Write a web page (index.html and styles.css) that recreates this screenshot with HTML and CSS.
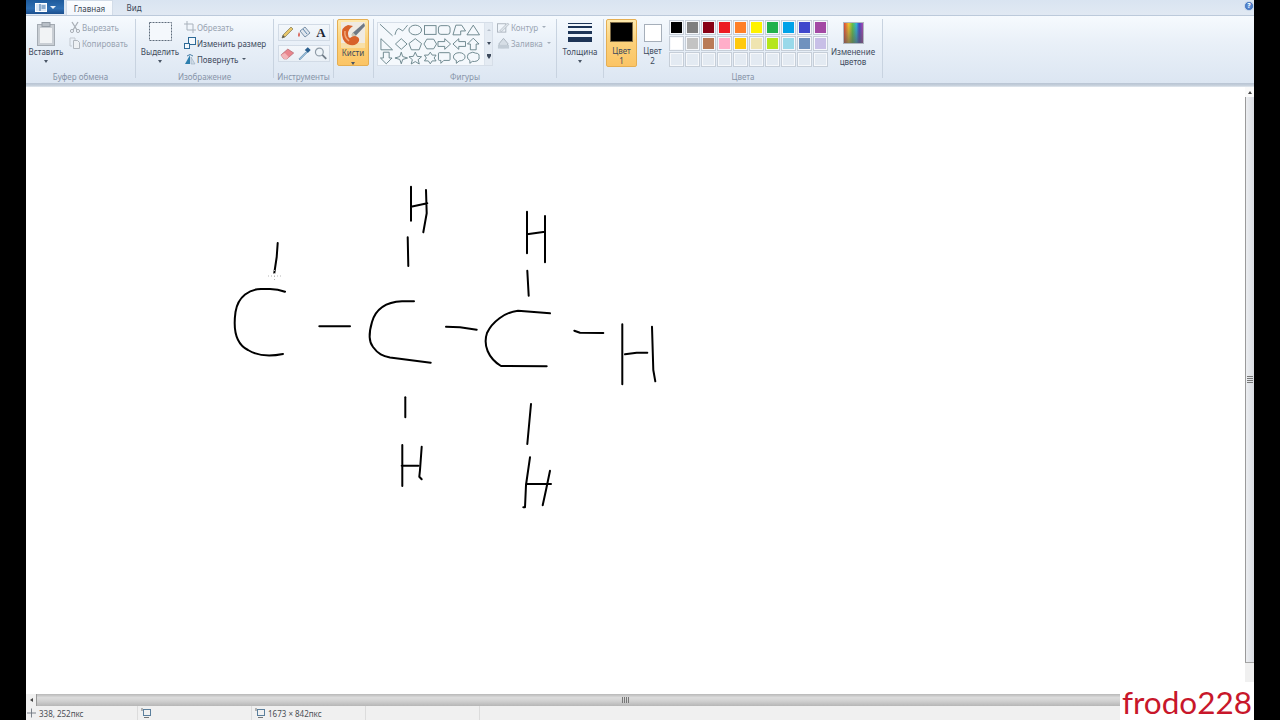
FILE: index.html
```html
<!DOCTYPE html>
<html lang="ru">
<head>
<meta charset="utf-8">
<title>Paint</title>
<link rel="stylesheet" href="styles.css">
</head>
<body>
<div class="app">
  <header class="tabstrip">
    <div class="appmenu">
      <svg width="12" height="9" viewBox="0 0 12 9"><rect x="0.5" y="0.5" width="11" height="8" fill="#dce8f5" stroke="#fff"/><path d="M5 1v7M6.5 3h4M6.5 5h4" stroke="#3a6ea5"/></svg>
      <span class="appcaret"></span>
    </div>
    <div class="tab active">Главная</div>
    <div class="tab">Вид</div>
    <div class="help">?</div>
  </header>

  <section class="ribbon">
    <div class="group g-clip">
      <div class="gbody">
        <div class="big w40">
          <div class="bigicon">
            <svg width="18" height="24" viewBox="0 0 18 24"><rect x="0.5" y="2.5" width="17" height="21" fill="#c9ced4" stroke="#a4abb3"/><rect x="3" y="6" width="12" height="15" fill="#f1f3f5"/><rect x="5" y="0.5" width="8" height="4" fill="#b8bfc7" stroke="#959da6"/></svg>
          </div>
          <div class="lbl">Вставить</div>
          <div class="caret"></div>
        </div>
        <div class="smallcol m3">
          <div class="row off">
            <svg class="ri" width="12" height="12" viewBox="0 0 12 12"><path d="M3 1l5 8M9 1L4 9" stroke="#a9afb6" stroke-width="1.3" fill="none"/><circle cx="3" cy="10" r="1.6" fill="none" stroke="#a9afb6"/><circle cx="9" cy="10" r="1.6" fill="none" stroke="#a9afb6"/></svg>
            <span>Вырезать</span>
          </div>
          <div class="row off">
            <svg class="ri" width="12" height="12" viewBox="0 0 12 12"><path d="M1 1h5v2M1 1v8h2" stroke="#c3c9d0" fill="none"/><path d="M4.500 3.500h4l2 2v6h-6z" fill="#eef1f4" stroke="#b0b6bd"/></svg>
            <span>Копировать</span>
          </div>
        </div>
      </div>
      <div class="glabel">Буфер обмена</div>
    </div>

    <div class="group g-image">
      <div class="gbody">
        <div class="big w48">
          <div class="bigicon">
            <svg width="23" height="19" viewBox="0 0 23 19"><rect x="0.500" y="0.500" width="22" height="18" fill="#f4f8fc" stroke="#5f6d7c" stroke-dasharray="2 1"/></svg>
          </div>
          <div class="lbl">Выделить</div>
          <div class="caret"></div>
        </div>
        <div class="smallcol">
          <div class="row off">
            <svg class="ri" width="12" height="12" viewBox="0 0 12 12"><path d="M3 0v9h9M0 3h9v9" stroke="#a9b2bc" fill="none"/></svg>
            <span>Обрезать</span>
          </div>
          <div class="row">
            <svg class="ri" width="12" height="12" viewBox="0 0 12 12"><rect x="4.500" y="0.500" width="7" height="7" fill="#f4f8fc" stroke="#2d6a97"/><rect x="0.500" y="6.500" width="5" height="5" fill="#f4f8fc" stroke="#2d6a97"/></svg>
            <span>Изменить размер</span>
          </div>
          <div class="row">
            <svg class="ri" width="12" height="12" viewBox="0 0 12 12"><path d="M1 11L6 2v9z" fill="#2d7fae"/><path d="M7 11V4l4 7z" fill="#cfdbe6" stroke="#8ca1b4" stroke-width=".5"/><path d="M3 3q3-3 6 0" fill="none" stroke="#4a7fa5"/></svg>
            <span>Повернуть</span><i class="mini"></i>
          </div>
        </div>
      </div>
      <div class="glabel">Изображение</div>
    </div>

    <div class="group g-tools">
      <div class="gbody">
        <div class="tools">
          <div class="toolrow">
            <svg width="17" height="17" viewBox="0 0 17 17"><path d="M3 14l1-3 8-8 2 2-8 8z" fill="#e8c66a" stroke="#7f7a55" stroke-width=".7"/><path d="M3 14l1-3 2 2z" fill="#555"/></svg>
            <svg width="17" height="17" viewBox="0 0 17 17"><path d="M4 7l5-4 5 6-5 4z" fill="#dfe6ee" stroke="#7890a8"/><path d="M7 5l4 5" stroke="#5f87ad"/><path d="M3 8q-2 4 0 5q2-2 0-5" fill="#d9645a"/></svg>
            <span class="textool">A</span>
          </div>
          <div class="toolrow">
            <svg width="17" height="17" viewBox="0 0 17 17"><path d="M2 10l7-6 6 4-7 6H5z" fill="#e9858d" stroke="#b0636c" stroke-width=".7"/><path d="M2 10l3 4h3l2-2-4-4z" fill="#f2b4b8"/></svg>
            <svg width="17" height="17" viewBox="0 0 17 17"><path d="M3 14l7-7 1 1-7 7z" fill="#9fc4e0" stroke="#5c87a8" stroke-width=".7"/><path d="M9 5l3-3 3 3-3 3z" fill="#2a5f8f"/></svg>
            <svg width="17" height="17" viewBox="0 0 17 17"><circle cx="7.500" cy="7" r="4" fill="#eef4f9" stroke="#8f9ba7" stroke-width="1.200"/><path d="M10.500 10l4 4" stroke="#6f7b87" stroke-width="1.800"/></svg>
          </div>
        </div>
      </div>
      <div class="glabel">Инструменты</div>
    </div>

    <div class="group g-brush">
      <div class="gbody">
        <div class="orange brushbtn">
          <div class="brushicon">
            <svg width="24" height="26" viewBox="0 0 24 26"><rect width="24" height="26" fill="#efeae2"/><rect y="21" width="24" height="5" fill="#f7dfa8"/><path d="M23 1L11 11.500l3 3L24 4z" fill="#6f7a86"/><path d="M12 10.500l3.500 3.500-2 2-3.500-3z" fill="#c9c4b4"/><path d="M7 3Q0 5 1 13t8 10q7 1 9-4 1-4-4-5-3 0-5 2-2-1-2-4 0-5 5-8z" fill="#d8622a"/><path d="M4 9q-1 6 4 10" fill="none" stroke="#f2a878" stroke-width="1.500"/></svg>
          </div>
          <div class="lbl">Кисти</div>
          <div class="caret"></div>
        </div>
      </div>
    </div>

    <div class="group g-shapes">
      <div class="gbody">
        <div class="shapepanel">
          <div class="shapes">
            <svg viewBox="0 0 15 14"><path d="M1 1l13 12"/></svg>
            <svg viewBox="0 0 15 14"><path d="M1 12q2-8 5-6t3 2 5-6"/></svg>
            <svg viewBox="0 0 15 14"><ellipse cx="7.500" cy="7" rx="6.500" ry="5"/></svg>
            <svg viewBox="0 0 15 14"><rect x="1.500" y="2.500" width="12" height="9"/></svg>
            <svg viewBox="0 0 15 14"><rect x="1.500" y="2.500" width="12" height="9" rx="2.500"/></svg>
            <svg viewBox="0 0 15 14"><path d="M1 12l3-10h6l4 6-5 0v4z"/></svg>
            <svg viewBox="0 0 15 14"><path d="M7.500 2L14 12H1z"/></svg>
            <svg viewBox="0 0 15 14"><path d="M2 1.500L14 13H2z"/></svg>
            <svg viewBox="0 0 15 14"><path d="M7.500 1.500L13.500 7l-6 5.500L1.500 7z"/></svg>
            <svg viewBox="0 0 15 14"><path d="M7.500 1.500L14 6.500 11.500 13h-8L1 6.500z"/></svg>
            <svg viewBox="0 0 15 14"><path d="M4 2h7l3 5-3 5H4L1 7z"/></svg>
            <svg viewBox="0 0 15 14"><path d="M1 4.500h7V1.500L14 7l-6 5.500V9.500H1z"/></svg>
            <svg viewBox="0 0 15 14"><path d="M14 4.500H7V1.500L1 7l6 5.500V9.500h7z"/></svg>
            <svg viewBox="0 0 15 14"><path d="M4.500 13V7h-3L7.500 1l6 6h-3v6z"/></svg>
            <svg viewBox="0 0 15 14"><path d="M4.500 1v6h-3l6 6 6-6h-3V1z"/></svg>
            <svg viewBox="0 0 15 14"><path d="M7.500 1l1.500 4.500L14 7 9 8.500 7.500 13 6 8.500 1 7l5-1.500z"/></svg>
            <svg viewBox="0 0 15 14"><path d="M7.500 1l2 4.300 4.500.4-3.500 3 1.200 4.500-4.200-2.500-4.200 2.500 1.200-4.500L1 5.700l4.500-.4z"/></svg>
            <svg viewBox="0 0 15 14"><path d="M7.500 1l2 3h4l-2 3 2 3h-4l-2 3-2-3h-4l2-3-2-3h4z"/></svg>
            <svg viewBox="0 0 15 14"><path d="M2.500 1.500h10q1 0 1 1v6q0 1-1 1H7l-3 3v-3H2.500q-1 0-1-1v-6q0-1 1-1z"/></svg>
            <svg viewBox="0 0 15 14"><path d="M7.500 1.500c3.500 0 6 1.800 6 4.300s-2.500 4.200-6 4.200l-3 2.500V9.500C2.500 8.800 1.500 7.500 1.500 5.800c0-2.500 2.500-4.300 6-4.300z"/></svg>
            <svg viewBox="0 0 15 14"><path d="M4 2q3-2 6 0 4 0 3.500 3.500 1 3-2 4.500-3 1-5 .5l-2.500 2v-3Q1 8 1.500 5.500 1.500 2.500 4 2z"/></svg>
          </div>
          <div class="shapescroll">
            <i class="su"></i><i class="sd"></i><i class="sm"></i>
          </div>
        </div>
        <div class="smallcol m4">
          <div class="row off">
            <svg class="ri" width="13" height="12" viewBox="0 0 14 12"><rect x="0.500" y="2.500" width="9" height="9" fill="none" stroke="#aab3bd"/><path d="M3 10l8-8 2 1-8 8z" fill="#dfe5eb" stroke="#aab3bd" stroke-width=".7"/></svg>
            <span>Контур</span><i class="mini off"></i>
          </div>
          <div class="row off">
            <svg class="ri" width="13" height="12" viewBox="0 0 14 12"><path d="M2 7l5-6 5 6-4 4H4z" fill="#d6dee6" stroke="#aab3bd"/><rect x="1" y="8" width="12" height="4" fill="#c2ccd6"/></svg>
            <span>Заливка</span><i class="mini off"></i>
          </div>
        </div>
      </div>
      <div class="glabel">Фигуры</div>
    </div>

    <div class="group g-thick">
      <div class="gbody">
        <div class="big w46">
          <div class="thickicon"><i class="t1"></i><i class="t2"></i><i class="t3"></i><i class="t4"></i></div>
          <div class="lbl">Толщина</div>
          <div class="caret"></div>
        </div>
      </div>
    </div>

    <div class="group g-colors">
      <div class="gbody">
        <div class="orange colorbtn">
          <div class="curcolor black"></div>
          <div class="lbl">Цвет<br>1</div>
        </div>
        <div class="color2">
          <div class="curcolor2"></div>
          <div class="lbl">Цвет<br>2</div>
        </div>
        <div class="palette">
          <i class="sw c1"></i><i class="sw c2"></i><i class="sw c3"></i><i class="sw c4"></i><i class="sw c5"></i><i class="sw c6"></i><i class="sw c7"></i><i class="sw c8"></i><i class="sw c9"></i><i class="sw c10"></i>
          <i class="sw c11"></i><i class="sw c12"></i><i class="sw c13"></i><i class="sw c14"></i><i class="sw c15"></i><i class="sw c16"></i><i class="sw c17"></i><i class="sw c18"></i><i class="sw c19"></i><i class="sw c20"></i>
          <i class="sw"></i><i class="sw"></i><i class="sw"></i><i class="sw"></i><i class="sw"></i><i class="sw"></i><i class="sw"></i><i class="sw"></i><i class="sw"></i><i class="sw"></i>
        </div>
        <div class="changecolors">
          <div class="rainbowwrap"><div class="rainbow"></div></div>
          <div class="lbl">Изменение<br>цветов</div>
        </div>
      </div>
      <div class="glabel">Цвета</div>
    </div>
  </section>
  <div class="ribbonshadow"></div>

  <main class="workspace">
    <svg class="canvas" viewBox="26 87 1219 607" preserveAspectRatio="none">
      <g class="ink">
        <path d="M285 291.700Q278 289 270 289H261C250 289 238 296 235.500 312C233 330 236 344 248 350C256 355 268 357 283 354"/>
        <path d="M277.700 243L276.700 257 274.300 273"/>
        <path d="M319.300 326.300H350"/>
        <path d="M414 301.300H402C388 302 376 308 372 322C369 332 369 342 373 347C378 354 383 356 390 357.500L430.700 362.700"/>
        <path d="M411 186.700V220.700M426 190L426.700 213.300 423.300 232.300M411 206.700L427.300 203.300"/>
        <path d="M407.700 237.300L408.300 266"/>
        <path d="M405.300 397.300V417.300"/>
        <path d="M402.300 445V486M401.700 465.700H418.300M421.700 446.700L420 470 419.300 476.700 421.700 479.300"/>
        <path d="M446 326.700L460 327.300 476.700 329.700"/>
        <path d="M550 313.300L518 310.700C505 312 492 322 487 333C483 345 488 358 501 366L546.700 366.300"/>
        <path d="M527 211.700V253.300M545 216V262.300M527 234.300L545 231.700"/>
        <path d="M527.300 270.700L528.700 295.700"/>
        <path d="M574.300 330.700L580 332.700 603.300 333"/>
        <path d="M622.300 324.300V384.300M625 354.300L636.700 352.700H647.300M652 326.700L653.300 370 655.300 381.300"/>
        <path d="M531 404L527.300 444"/>
        <path d="M530 457.300L526 485 525 507.300H523.300M526 484H551M550 470.700L546 490 542.700 505.300"/>
      </g>
      <path class="cursor" d="M268 276h13M274.500 270v12"/>
    </svg>
    <div class="vscroll">
      <div class="arrowbtn"><i class="up"></i></div>
      <div class="vthumb"><i></i><i></i><i></i><i></i></div>
      <div class="vrest"></div>
    </div>
  </main>

  <div class="hscroll">
    <div class="harrow"><i></i></div>
    <div class="hthumb"><span class="grip"><i></i><i></i><i></i><i></i></span></div>
  </div>

  <footer class="status">
    <div class="cell c-pos">
      <svg width="9" height="10" viewBox="0 0 10 10"><path d="M5 0v10M0 5h10" stroke="#6f7780"/></svg>
      <span>338, 252пкс</span>
    </div>
    <div class="cell c-sel">
      <svg width="10" height="10" viewBox="0 0 10 10"><rect x="2.500" y="1.500" width="7" height="6" fill="none" stroke="#5b7f9c"/><path d="M1 0v3M3 9.500h5" stroke="#777"/></svg>
    </div>
    <div class="cell c-size">
      <svg width="10" height="10" viewBox="0 0 10 10"><rect x="2.500" y="1.500" width="7" height="6" fill="none" stroke="#5b7f9c"/><path d="M1 0v3M3 9.500h5" stroke="#777"/></svg>
      <span>1673 × 842пкс</span>
    </div>
    <div class="cell c-empty"></div>
    <div class="cell c-rest"></div>
  </footer>

  <div class="watermark">frodo228</div>
</div>
</body>
</html>
```

FILE: styles.css
```css
* { box-sizing: border-box; }
html, body { margin: 0; height: 100%; }
body {
  background: #000;
  padding: 0 26px;
  overflow: hidden;
  font-family: "Noto Sans", "Open Sans", sans-serif;
  font-size: 8px;
  color: #3d4a5c;
}
.app {
  position: relative;
  width: 1228px;
  height: 720px;
  display: flex;
  flex-direction: column;
  background: #fff;
}

/* tab strip */
.tabstrip {
  height: 15px;
  flex: none;
  display: flex;
  background: linear-gradient(#d9e4f1, #e1e9f3);
}
.appmenu {
  width: 38px;
  height: 14px;
  background: linear-gradient(#1d5a9c, #2f6fb3 60%, #1b4f8e);
  display: flex;
  align-items: center;
  justify-content: center;
  gap: 3px;
}
.appcaret {
  border: 3px solid transparent;
  border-top-color: #e8f0f8;
  border-bottom: 0;
}
.tab {
  line-height: 16px;
  text-align: center;
  font-size: 8px;
  color: #3a4656;
}
.tab.active {
  width: 47px;
  margin-left: 2px;
  background: linear-gradient(#fbfdff, #f3f7fc);
  border: 1px solid #d2dce8;
  border-bottom: 0;
  line-height: 15px;
}
.tab:not(.active) { width: 42px; }
.help {
  margin-left: auto;
  width: 10px;
  height: 10px;
  margin-top: 1px;
  border-radius: 50%;
  background: radial-gradient(#6f9ee0, #2d5fb0);
  border: 1px solid #c6d6ea;
  color: #fff;
  font-size: 7px;
  line-height: 8px;
  text-align: center;
  font-weight: 700;
  overflow: hidden;
}

/* ribbon */
.ribbon {
  height: 68px;
  flex: none;
  display: flex;
  border-top: 1px solid #bccadb;
  background: linear-gradient(#f6fafe 0, #e9f0f8 40%, #dce6f2 100%);
}
.ribbonshadow {
  height: 4px;
  flex: none;
  background: linear-gradient(#b8c4d3, #c6d0dc 60%, #e3e9f0);
}
.group {
  display: flex;
  flex-direction: column;
  margin-top: 2px;
  border-right: 1px solid;
  border-image: linear-gradient(transparent 2px, #c8d3e0 2px, #c8d3e0 59px, transparent 59px) 1;
}
.gbody {
  display: flex;
  flex: none;
  height: 53px;
  padding-top: 1px;
}
.glabel {
  flex: none;
  height: 12px;
  line-height: 12px;
  text-align: center;
  color: #8794a8;
  font-size: 8px;
  white-space: nowrap;
}
.g-clip { width: 110px; }
.g-image { width: 138px; }
.g-tools { width: 60px; }
.g-brush { width: 40px; }
.g-shapes { width: 183px; }
.g-thick { width: 47px; }
.g-colors { width: 279px; }

.big { display: flex; flex-direction: column; align-items: center; flex: none; }
.w40 { width: 40px; }
.w48 { width: 48px; }
.w46 { width: 46px; }
.bigicon {
  height: 28px;
  display: flex;
  align-items: flex-start;
  justify-content: center;
  padding-top: 3px;
}
.lbl {
  line-height: 10px;
  text-align: center;
  white-space: nowrap;
  font-size: 8px;
}
.caret {
  margin-top: 3px;
  border: 2.500px solid transparent;
  border-top: 3px solid #4a5666;
  border-bottom: 0;
  width: 0;
}

.smallcol { display: flex; flex-direction: column; flex: none; }
.m3 { margin-left: 3px; }
.m4 { margin-left: 4px; }
.row {
  height: 16px;
  display: flex;
  align-items: center;
  white-space: nowrap;
  gap: 1px;
}
.ri { flex: none; }
.row.off { color: #98a3b1; }
.mini {
  margin-left: 3px;
  border: 2px solid transparent;
  border-top: 2px solid #4a5666;
  border-bottom: 0;
}
.mini.off { border-top-color: #a4aeba; }

/* tools */
.tools {
  margin: 5px 0 0 4px;
  width: 52px;
  display: flex;
  flex-direction: column;
  gap: 4px;
}
.toolrow {
  height: 17px;
  display: flex;
  background: linear-gradient(#f3f7fb, #e9eff6);
  border: 1px solid #d2dbe6;
  justify-content: space-between;
  align-items: center;
}
.textool {
  width: 16px;
  text-align: center;
  font: 700 13px/15px "Liberation Serif", serif;
  color: #1c2430;
}

/* brushes */
.orange {
  background: linear-gradient(#fde9ae, #fcd27c 45%, #fbc465);
  border: 1px solid #e5ae52;
  border-radius: 2px;
}
.brushbtn {
  margin-left: 3px;
  width: 32px;
  height: 47px;
  display: flex;
  flex-direction: column;
  align-items: center;
  padding-top: 2px;
}
.brushicon { height: 26px; }
.brushbtn .caret { margin-top: 4px; }

/* shapes */
.shapepanel {
  margin: 3px 0 0 3px;
  width: 116px;
  height: 44px;
  display: flex;
  background: #f4f8fc;
  border: 1px solid #d6dee8;
}
.shapes {
  width: 106px;
  display: grid;
  grid-template-columns: repeat(7, 14.500px);
  grid-auto-rows: 14px;
  padding: 0 0 0 1px;
}
.shapes svg {
  width: 14.500px;
  height: 14px;
  fill: none;
  stroke: #5f7b82;
  stroke-width: .9;
}
.shapescroll {
  flex: 1;
  display: flex;
  flex-direction: column;
  align-items: center;
  justify-content: space-around;
  background: #e4ebf3;
  border-left: 1px solid #dbe3ec;
}
.su, .sd, .sm { border: 2px solid transparent; }
.su { border-bottom: 2px solid #b6bfca; border-top: 0; }
.sd { border-top: 3px solid #3d4a5c; border-bottom: 0; }
.sm { border-top: 3px solid #3d4a5c; border-bottom: 0; box-shadow: 0 -2px 0 0 #3d4a5c; }

/* thickness */
.thickicon {
  width: 24px;
  height: 28px;
  display: flex;
  flex-direction: column;
  padding-top: 4px;
}
.thickicon i { display: block; background: #1d3456; flex: none; }
.t1 { height: 1px; margin-bottom: 2px; background: #34405a; }
.t2 { height: 2px; margin-bottom: 3px; }
.t3 { height: 3px; margin-bottom: 3px; }
.t4 { height: 5px; }

/* colours */
.colorbtn {
  margin-left: 2px;
  width: 31px;
  height: 48px;
  display: flex;
  flex-direction: column;
  align-items: center;
  padding-top: 2px;
}
.curcolor {
  width: 23px;
  height: 23px;
  background: #000;
  border: 1px solid #7d6a45;
  margin-bottom: 4px;
}
.color2 {
  margin: 5px 0 0 6px;
  width: 19px;
  display: flex;
  flex-direction: column;
  align-items: center;
}
.curcolor2 {
  width: 18px;
  height: 18px;
  background: #fff;
  border: 1px solid #a6afba;
  margin-bottom: 4px;
}
.palette {
  margin: 1px 0 0 7px;
  width: 160px;
  height: 48px;
  display: grid;
  grid-template-columns: repeat(10, 15px);
  grid-template-rows: repeat(3, 15px);
  gap: 1px;
}
.sw {
  display: block;
  border: 1px solid #c6ced8;
  background-clip: padding-box;
  background-color: #e3eaf2;
  box-shadow: inset 0 0 0 1px #f6f8fb;
}
.c1 { background-color: #000; }
.c2 { background-color: #7f7f7f; }
.c3 { background-color: #880015; }
.c4 { background-color: #ed1c24; }
.c5 { background-color: #ff7f27; }
.c6 { background-color: #fff200; }
.c7 { background-color: #22b14c; }
.c8 { background-color: #00a2e8; }
.c9 { background-color: #3f48cc; }
.c10 { background-color: #a349a4; }
.c11 { background-color: #fff; }
.c12 { background-color: #c3c3c3; }
.c13 { background-color: #b97a57; }
.c14 { background-color: #ffaec9; }
.c15 { background-color: #ffc90e; }
.c16 { background-color: #efe4b0; }
.c17 { background-color: #b5e61d; }
.c18 { background-color: #99d9ea; }
.c19 { background-color: #7092be; }
.c20 { background-color: #c8bfe7; }
.changecolors {
  width: 48px;
  display: flex;
  flex-direction: column;
  align-items: center;
}
.rainbowwrap {
  height: 28px;
  padding-top: 3px;
}
.rainbow {
  width: 21px;
  height: 22px;
  border: 1px solid #aeb6c0;
  background:
    linear-gradient(rgba(255,255,255,0), rgba(90,90,90,.65)),
    linear-gradient(90deg, #e0463c, #f3c52c 25%, #5ec04a 45%, #2fb6d8 65%, #3f48cc 80%, #b048b0);
}

/* canvas */
.workspace {
  height: 607px;
  flex: none;
  display: flex;
  background: #fff;
}
.canvas {
  display: block;
  width: 1219px;
  height: 607px;
  flex: none;
}
.ink path {
  fill: none;
  stroke: #000;
  stroke-width: 2;
  stroke-linecap: round;
  stroke-linejoin: round;
}
.cursor {
  fill: none;
  stroke: #b5b5b5;
  stroke-width: 1;
  stroke-dasharray: 1 2;
}
.vscroll {
  flex: 1;
  display: flex;
  flex-direction: column;
  background: #f0f0f0;
}
.arrowbtn {
  height: 10px;
  flex: none;
  display: flex;
  align-items: center;
  justify-content: center;
  background: #fafafa;
}
.up {
  border: 2px solid transparent;
  border-bottom: 3px solid #444;
  border-top: 0;
}
.vthumb {
  height: 566px;
  flex: none;
  display: flex;
  flex-direction: column;
  align-items: center;
  justify-content: center;
  gap: 1px;
  background: linear-gradient(90deg, #eceef1, #d9dce2);
  border-left: 1px solid #9a9a9a;
  border-bottom: 1px solid #a5a5a5;
}
.vthumb i { display: block; width: 6px; height: 1px; background: #777; }
.vrest { flex: 1; }

.hscroll {
  height: 12px;
  flex: none;
  display: flex;
  background: #f0f0f0;
}
.harrow {
  width: 10px;
  flex: none;
  display: flex;
  align-items: center;
  justify-content: center;
}
.harrow i {
  border: 2px solid transparent;
  border-right: 3px solid #444;
  border-left: 0;
}
.hthumb {
  flex: 1;
  display: flex;
  align-items: center;
  justify-content: center;
  padding-right: 40px;
  background: linear-gradient(#b8b8b8, #dcdcdc 30%, #d0d0d0 60%, #b6b6b6);
  border-left: 1px solid #999;
}
.grip { display: flex; gap: 1px; }
.grip i { display: block; width: 1px; height: 6px; background: #777; }

.status {
  height: 14px;
  flex: none;
  display: flex;
  background: #f0f0f0;
  color: #4b4f55;
  font-size: 8px;
}
.cell {
  display: flex;
  align-items: center;
  gap: 3px;
  padding-left: 3px;
  border-right: 1px solid #dcdcdc;
  white-space: nowrap;
}
.c-pos { width: 112px; padding-left: 1px; }
.c-sel { width: 114px; }
.c-size { width: 114px; }
.c-empty { width: 114px; }
.c-rest { flex: 1; border-right: 0; }

.watermark {
  position: absolute;
  right: 0;
  bottom: 0;
  width: 134px;
  height: 38px;
  background: #fff;
  color: #c8172b;
  font-family: "Lato", "Noto Sans", sans-serif;
  font-size: 31.500px;
  line-height: 38px;
  padding-top: 1px;
  text-align: center;
  white-space: nowrap;
}
```
